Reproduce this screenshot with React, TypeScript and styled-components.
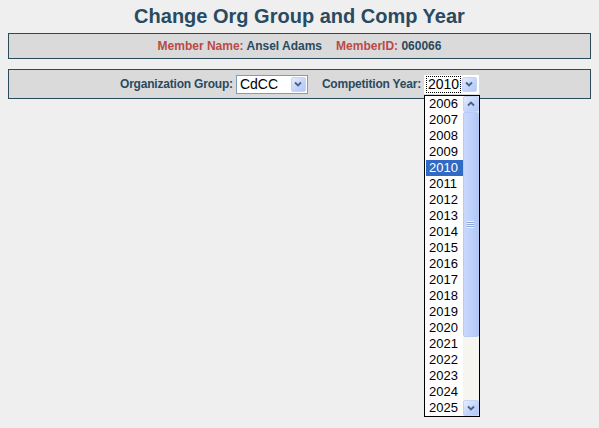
import styled, { createGlobalStyle } from "styled-components";

const YEARS = Array.from({ length: 20 }, (_, i) => 2006 + i);
const SELECTED = 2010;

const GlobalStyle = createGlobalStyle`
    html, body {
        margin: 0;
        background: #efefef;
    }
    body {
        min-height: 100vh;
        box-sizing: border-box;
        padding: 8px;
        font-family: "Liberation Sans", Arial, sans-serif;
    }
`;

const Title = styled.h1`
    margin: 0;
    height: 25px;
    line-height: 17px;
    text-align: center;
    font-size: 20px;
    font-weight: bold;
    color: #294a5f;
`;

const Panel = styled.div<{ $h: number; $gap?: number; $tight?: boolean }>`
    height: ${(p) => p.$h}px;
    box-sizing: border-box;
    border: 1px solid #2b4a5a;
    background: #dadada;
    display: flex;
    align-items: center;
    justify-content: center;
    gap: ${(p) => p.$gap ?? 0}px;
    font-size: 12px;
    font-weight: bold;
    letter-spacing: ${(p) => (p.$tight ? "-0.2px" : "0")};
    color: #2b4a5f;
    white-space: pre;
    & + & {
        margin-top: 10px;
    }
`;

const Label = styled.span`
    color: #b94a48;
`;

const Spacer = styled.span`
    width: 14px;
`;

const Field = styled.label`
    display: flex;
    align-items: center;
    gap: 3px;
    position: relative;
`;

const SelectBox = styled.div<{ $w: number; $bare?: boolean }>`
    width: ${(p) => p.$w}px;
    height: 19px;
    box-sizing: border-box;
    border: 1px solid ${(p) => (p.$bare ? "transparent" : "#7f9db9")};
    background: #fff;
    display: flex;
    align-items: center;
    padding: 1px;
    letter-spacing: 0;
`;

const SelectText = styled.span<{ $focus?: boolean }>`
    flex: 1;
    height: 17px;
    line-height: 17px;
    margin-right: 1px;
    padding-left: 2px;
    font-family: "Liberation Sans", Arial, sans-serif;
    font-weight: normal;
    font-size: 14px;
    color: #000;
    outline: ${(p) => (p.$focus ? "1px dotted #000" : "none")};
    outline-offset: -1px;
`;

const ArrowBtn = styled.span<{ $w?: number; $h?: number }>`
    width: ${(p) => p.$w ?? 15}px;
    height: ${(p) => p.$h ?? 15}px;
    box-sizing: border-box;
    border: 1px solid #c3d3fd;
    border-radius: 2px;
    background: linear-gradient(135deg, #e6eefc 0%, #c1d3fb 60%, #b4c8f6 100%);
    display: flex;
    align-items: center;
    justify-content: center;
    flex-shrink: 0;
`;

const Chevron = ({ up }: { up?: boolean }) => (
    <svg width="8" height="6" viewBox="0 0 8 6">
        <path
            d={up ? "M1 4.5L4 1.5L7 4.5" : "M1 1.5L4 4.5L7 1.5"}
            fill="none"
            stroke="#4d6185"
            strokeWidth="1.8"
        />
    </svg>
);

const DropList = styled.div`
    position: absolute;
    top: 20px;
    right: -1px;
    width: 56px;
    height: 322px;
    box-sizing: border-box;
    border: 1px solid #000;
    background: #fff;
    display: flex;
    z-index: 2;
    letter-spacing: 0;
`;

const Options = styled.ul`
    list-style: none;
    margin: 0;
    padding: 0 0 0 1px;
    flex: 1;
`;

const Option = styled.li<{ $sel?: boolean }>`
    height: 16px;
    line-height: 16px;
    padding-left: 3px;
    font-weight: normal;
    font-size: 13px;
    color: ${(p) => (p.$sel ? "#fff" : "#000")};
    background: ${(p) => (p.$sel ? "#316ac5" : "transparent")};
`;

const ScrollBar = styled.div`
    width: 16px;
    display: flex;
    flex-direction: column;
    background: #f6f5ef;
`;

const Thumb = styled.div`
    height: 225px;
    box-sizing: border-box;
    border: 1px solid #b8cbf7;
    border-radius: 2px;
    background: linear-gradient(90deg, #c9d8fc 0%, #bcd0fb 60%, #b0c6f4 100%);
    display: flex;
    align-items: center;
    justify-content: center;
`;

const Grip = styled.span`
    width: 7px;
    height: 7px;
    background: repeating-linear-gradient(180deg, #eef3fe 0 1px, #8ca6e0 1px 2px);
`;

const Track = styled.div`
    flex: 1;
`;

export default function App() {
    return (
        <>
            <GlobalStyle />
            <Title>Change Org Group and Comp Year</Title>
            <Panel $h={26}>
                <Label>Member Name:</Label> Ansel Adams
                <Spacer />
                <Label>MemberID:</Label> 060066
            </Panel>
            <Panel $h={30} $gap={14} $tight>
                <Field>
                    Organization Group:
                    <SelectBox $w={72}>
                        <SelectText>CdCC</SelectText>
                        <ArrowBtn>
                            <Chevron />
                        </ArrowBtn>
                    </SelectBox>
                </Field>
                <Field>
                    Competition Year:
                    <SelectBox $w={55} $bare>
                        <SelectText $focus>{SELECTED}</SelectText>
                        <ArrowBtn>
                            <Chevron />
                        </ArrowBtn>
                    </SelectBox>
                    <DropList>
                        <Options>
                            {YEARS.map((y) => (
                                <Option key={y} $sel={y === SELECTED}>
                                    {y}
                                </Option>
                            ))}
                        </Options>
                        <ScrollBar>
                            <ArrowBtn $w={16} $h={16}>
                                <Chevron up />
                            </ArrowBtn>
                            <Thumb>
                                <Grip />
                            </Thumb>
                            <Track />
                            <ArrowBtn $w={16} $h={16}>
                                <Chevron />
                            </ArrowBtn>
                        </ScrollBar>
                    </DropList>
                </Field>
            </Panel>
        </>
    );
}
